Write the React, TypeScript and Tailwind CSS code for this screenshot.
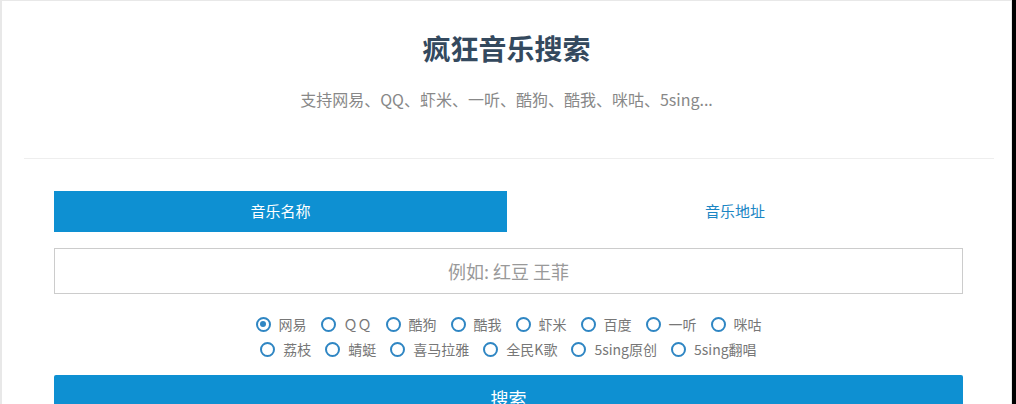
import React from "react";

const row1 = ["网易", "ＱＱ", "酷狗", "酷我", "虾米", "百度", "一听", "咪咕"];
const row2 = ["荔枝", "蜻蜓", "喜马拉雅", "全民K歌", "5sing原创", "5sing翻唱"];

function Radio({ label, checked }: { label: string; checked?: boolean }) {
  return (
    <label className="flex items-center mx-[7px] cursor-pointer">
      <span className="w-[15px] h-[15px] rounded-full border-[2.5px] border-[#2f86c3] flex items-center justify-center box-border">
        {checked && <span className="w-[6px] h-[6px] rounded-full bg-[#2f86c3]" />}
      </span>
      <span className="ml-[8px] text-[14px] leading-[20px] text-[#777]">{label}</span>
    </label>
  );
}

export default function App() {
  return (
    <div
      className="w-[1016px] h-[404px] bg-black flex overflow-hidden"
      style={{ fontFamily: '"Noto Sans CJK SC", "Noto Sans", sans-serif' }}
    >
      <div className="w-[1012px] h-[404px] bg-white border-l-2 border-t border-r border-[#e8e8e8] box-border">
        <div className="pt-[27px] flex flex-col items-center">
          <h1 className="text-[28px] leading-[40px] font-bold text-[#34495e]">疯狂音乐搜索</h1>
          <p className="mt-[19px] text-[16px] leading-[24px] text-[#888]">
            支持网易、QQ、虾米、一听、酷狗、酷我、咪咕、5sing...
          </p>
        </div>
        <div className="mt-[47px] ml-[22px] w-[970px] h-px bg-[#eeeeee]" />
        <div className="ml-[52px] w-[909px] mt-[32px]">
          <div className="flex h-[41px]">
            <div className="w-[453px] bg-[#0e90d2] text-white text-[15px] flex items-center justify-center">
              音乐名称
            </div>
            <div className="flex-1 text-[#1b86c4] text-[15px] flex items-center justify-center">
              音乐地址
            </div>
          </div>
          <input
            className="mt-[16px] w-full h-[46px] border border-[#cccccc] text-center text-[18px] outline-none placeholder:text-[#999] bg-white"
            placeholder="例如: 红豆 王菲"
          />
          <div className="mt-[20px] flex justify-center">
            {row1.map((l, i) => (
              <Radio key={l} label={l} checked={i === 0} />
            ))}
          </div>
          <div className="mt-[5px] flex justify-center">
            {row2.map((l) => (
              <Radio key={l} label={l} />
            ))}
          </div>
          <button className="mt-[16px] w-full h-[46px] bg-[#0e90d2] text-white text-[18px] rounded-t-[2px] flex items-center justify-center">
            搜索
          </button>
        </div>
      </div>
    </div>
  );
}
